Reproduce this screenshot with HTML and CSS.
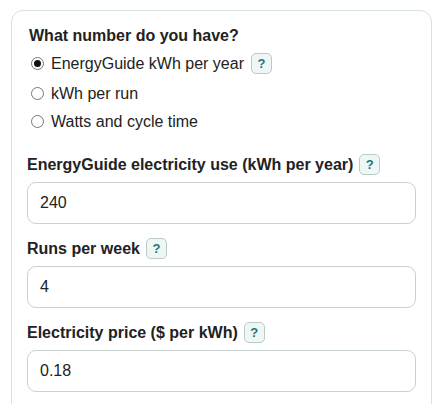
FILE: index.html
```html
<!DOCTYPE html>
<html lang="en">
<head>
    <meta charset="UTF-8">
    <meta name="viewport" content="width=device-width, initial-scale=1.0">
    <title>Dishwasher energy cost</title>
    <link rel="stylesheet" href="styles.css">
</head>
<body>
    <div class="card">
        <div class="choice">
            <div class="choice-title">What number do you have?</div>
            <div class="options">
                <label class="option">
                    <input type="radio" name="source" value="guide" checked>
                    <span>EnergyGuide kWh per year</span>
                    <button type="button" class="help">?</button>
                </label>
                <label class="option">
                    <input type="radio" name="source" value="run">
                    <span>kWh per run</span>
                </label>
                <label class="option">
                    <input type="radio" name="source" value="watts">
                    <span>Watts and cycle time</span>
                </label>
            </div>
        </div>
        <div class="field">
            <div class="field-label">
                <label for="annualKwh">EnergyGuide electricity use (kWh per year)</label>
                <button type="button" class="help">?</button>
            </div>
            <input type="text" id="annualKwh" class="text-input" value="240">
        </div>
        <div class="field">
            <div class="field-label">
                <label for="runsPerWeek">Runs per week</label>
                <button type="button" class="help">?</button>
            </div>
            <input type="text" id="runsPerWeek" class="text-input" value="4">
        </div>
        <div class="field">
            <div class="field-label">
                <label for="price">Electricity price ($ per kWh)</label>
                <button type="button" class="help">?</button>
            </div>
            <input type="text" id="price" class="text-input" value="0.18">
        </div>
    </div>
</body>
</html>
```

FILE: styles.css
```css
body {
    font-family: "Liberation Sans", Arial, sans-serif;
    margin: 0;
    padding: 10px 11px;
    background-color: #fff;
    color: #222;
}
.card {
    border: 1px solid #d6e3e0;
    border-radius: 12px;
    padding: 15px;
    background-color: #fff;
}
.choice {
    margin-bottom: 22px;
}
.choice-title {
    font-size: 16px;
    font-weight: bold;
    line-height: 19px;
    padding-left: 2px;
    margin-bottom: 6px;
}
.options {
    display: flex;
    flex-direction: column;
    gap: 7px;
}
.option {
    display: flex;
    align-items: center;
    gap: 7px;
    font-size: 16px;
    min-height: 21px;
    padding-left: 4px;
}
.option .help {
    margin: 2px 0;
}
.option input {
    appearance: none;
    -webkit-appearance: none;
    width: 13px;
    height: 13px;
    margin: 0;
    border: 1px solid #767676;
    border-radius: 50%;
    background-color: #fff;
    display: grid;
    place-content: center;
}
.option input:checked::before {
    content: "";
    width: 7px;
    height: 7px;
    border-radius: 50%;
    background-color: #111;
}
.help {
    font-family: "Liberation Sans", Arial, sans-serif;
    width: 21px;
    height: 21px;
    padding: 0;
    border: 1px solid #b8cbc7;
    border-radius: 5px;
    background-color: #eef7f5;
    color: #1d7674;
    font-size: 13px;
    font-weight: bold;
    cursor: pointer;
}
.field {
    margin-bottom: 14px;
}
.field-label {
    display: flex;
    align-items: center;
    gap: 6px;
    margin-bottom: 7px;
    font-size: 16px;
    font-weight: bold;
}
.text-input {
    display: block;
    width: 100%;
    box-sizing: border-box;
    height: 42px;
    padding: 0 12px;
    border: 1px solid #c7d2d0;
    border-radius: 9px;
    font-family: "Liberation Sans", Arial, sans-serif;
    font-size: 16px;
    color: #222;
    background-color: #fff;
}
```
